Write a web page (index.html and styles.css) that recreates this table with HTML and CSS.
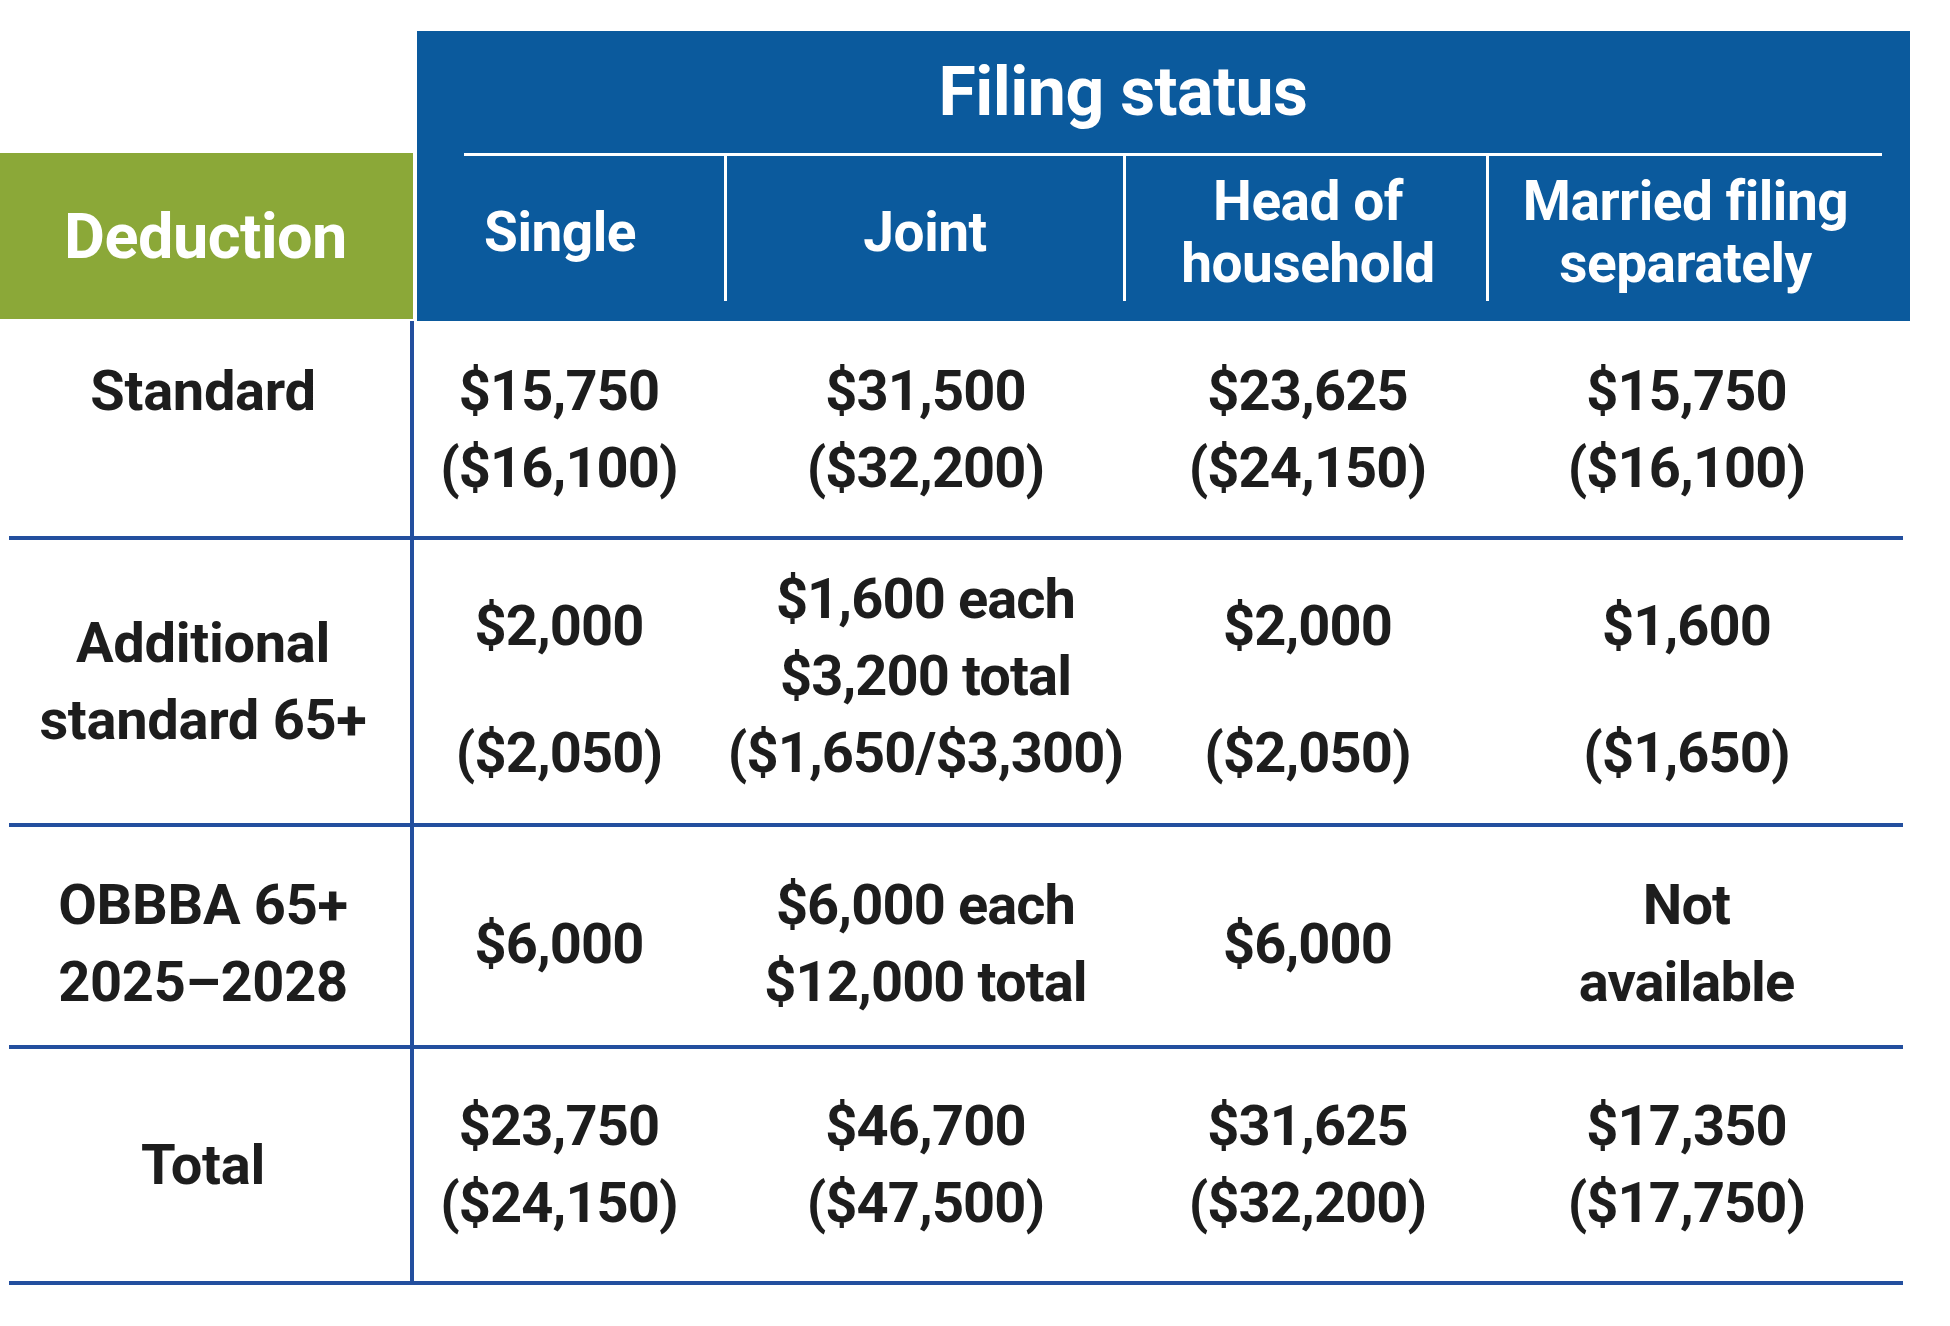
FILE: index.html
```html
<!DOCTYPE html>
<html lang="en">
<head>
<meta charset="utf-8">
<title>Deductions by filing status</title>
<link rel="stylesheet" href="styles.css">
</head>
<body>
<div class="chart">
  <div class="head">
    <div class="ded-head">Deduction</div>
    <div class="blue">
      <div class="title">Filing status</div>
      <div class="rule"></div>
      <div class="subs">
        <div class="sub sub-single">Single</div>
        <div class="sub">Joint</div>
        <div class="sub sub-head">Head of<br>household</div>
        <div class="sub">Married filing<br>separately</div>
      </div>
    </div>
  </div>

  <div class="row row-standard">
    <div class="label label-top">Standard</div>
    <div class="cell c1">$15,750<br>($16,100)</div>
    <div class="cell c2">$31,500<br>($32,200)</div>
    <div class="cell c3">$23,625<br>($24,150)</div>
    <div class="cell c4">$15,750<br>($16,100)</div>
  </div>

  <div class="row row-additional">
    <div class="label">Additional<br>standard 65+</div>
    <div class="cell c1 split"><span>$2,000</span><span>($2,050)</span></div>
    <div class="cell c2">$1,600 each<br>$3,200 total<br>($1,650/$3,300)</div>
    <div class="cell c3 split"><span>$2,000</span><span>($2,050)</span></div>
    <div class="cell c4 split"><span>$1,600</span><span>($1,650)</span></div>
  </div>

  <div class="row row-obbba">
    <div class="label label-low">OBBBA 65+<br>2025–2028</div>
    <div class="cell c1">$6,000</div>
    <div class="cell c2">$6,000 each<br>$12,000 total</div>
    <div class="cell c3">$6,000</div>
    <div class="cell c4">Not<br>available</div>
  </div>

  <div class="row row-total">
    <div class="label">Total</div>
    <div class="cell c1">$23,750<br>($24,150)</div>
    <div class="cell c2">$46,700<br>($47,500)</div>
    <div class="cell c3">$31,625<br>($32,200)</div>
    <div class="cell c4">$17,350<br>($17,750)</div>
  </div>
</div>
</body>
</html>
```

FILE: styles.css
```css
html, body {
  margin: 0;
  padding: 0;
  background: #ffffff;
}

body {
  font-family: Roboto, "Liberation Sans", Arial, sans-serif;
  font-weight: 700;
  color: #1d1d1d;
}

.chart {
  width: 1910px;
  padding-top: 31px;
}

/* ---------- header ---------- */
.head {
  display: flex;
  align-items: flex-end;
}

.ded-head {
  width: 413px;
  height: 166px;
  margin-bottom: 2px;
  background: #8ba838;
  color: #ffffff;
  font-size: 63px;
  display: flex;
  align-items: center;
  justify-content: center;
  letter-spacing: -0.5px;
  padding-right: 2px;
  box-sizing: border-box;
}

.blue {
  margin-left: 4px;
  width: 1493px;
  height: 290px;
  background: #0b5a9d;
  color: #ffffff;
  display: flex;
  flex-direction: column;
}

.title {
  height: 122px;
  display: flex;
  align-items: center;
  justify-content: center;
  padding-right: 81px;
  font-size: 68px;
  letter-spacing: -0.5px;
}

.rule {
  height: 3px;
  margin: 0 28px 0 47px;
  background: #ffffff;
}

.subs {
  display: grid;
  grid-template-columns: 307px 399px 363px 1fr;
  height: 145px;
  margin-right: 28px;
}

.sub {
  display: flex;
  align-items: center;
  justify-content: center;
  text-align: center;
  font-size: 55px;
  line-height: 62px;
  letter-spacing: -0.5px;
  padding-top: 6px;
  border-left: 3px solid #ffffff;
}

.sub-single {
  border-left: none;
  padding-right: 21px;
}

.sub-head {
  padding-left: 4px;
}

/* ---------- body rows ---------- */
.row {
  display: grid;
  grid-template-columns: 405px 306px 399px 363px 1fr;
  margin: 0 7px 0 9px;
  border-bottom: 4px solid #234f9e;
  font-size: 56px;
  line-height: 77px;
}

.label {
  border-right: 4px solid #234f9e;
  display: flex;
  align-items: center;
  justify-content: center;
  text-align: center;
  padding-right: 13px;
  letter-spacing: -0.3px;
}

.label-top {
  align-items: flex-start;
}

.label-low {
  padding-top: 16px;
}

.cell {
  display: flex;
  align-items: center;
  justify-content: center;
  text-align: center;
  letter-spacing: -0.9px;
}

.c1 {
  padding-right: 16px;
}

.c2 {
  padding-left: 12px;
}

.c3 {
  padding-left: 14px;
}

.c4 {
  padding-right: 12px;
}

.split {
  flex-direction: column;
  justify-content: space-between;
  padding-top: 27px;
}

.row-standard .cell,
.row-standard .label {
  padding-top: 32px;
  padding-bottom: 29px;
}

.row-standard .label {
  padding-bottom: 0;
}

.row-additional {
  padding: 21px 0 31px;
}

.row-additional .label {
  margin: -21px 0 -31px;
}

.row-obbba {
  padding: 40px 0 24px;
}

.row-obbba .label {
  margin: -40px 0 -24px;
}

.row-total {
  padding: 39px 0 39px;
}

.row-total .label {
  margin: -39px 0 -39px;
}
```
